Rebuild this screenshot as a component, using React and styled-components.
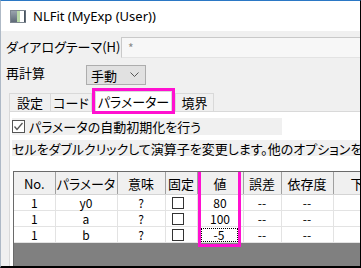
import React from "react";
import styled, { createGlobalStyle } from "styled-components";

const GlobalStyle = createGlobalStyle`
  html, body {
    margin: 0;
    padding: 0;
    background: #ffffff;
  }
  body {
    font-family: "Noto Sans CJK JP", "Noto Sans", sans-serif;
    font-feature-settings: "palt";
    color: #000;
  }
`;

const Window = styled.div`
  width: 361px;
  height: 268px;
  box-sizing: border-box;
  border-top: 1px solid #2b78c5;
  border-right: 1px solid #000;
  border-bottom: 2px solid #000;
  border-left: 1px solid #aeb9c6;
  background: #f0f0f0;
  display: flex;
  flex-direction: column;
  overflow: hidden;
`;

const TitleBar = styled.div`
  height: 30px;
  flex: none;
  background: #fff;
  display: flex;
  align-items: center;
  padding-left: 9px;
  gap: 7px;
`;

const Title = styled.span`
  font-family: "Noto Sans", "Liberation Sans", sans-serif;
  font-size: 13px;
  line-height: 1;
`;

const Body = styled.div`
  flex: 1;
  min-height: 0;
  display: flex;
  flex-direction: column;
  padding: 6px 0 0 5px;
  font-size: 13px;
`;

const FieldRow = styled.div`
  display: flex;
  align-items: center;
  margin-top: ${(p) => p.$top || 0}px;
`;

const Label = styled.span`
  width: ${(p) => p.$w}px;
  flex: none;
  line-height: 1;
  padding-bottom: ${(p) => p.$lift || 0}px;
`;

const ThemeInput = styled.div`
  flex: 1;
  height: 21px;
  box-sizing: border-box;
  border: 1px solid #c9c9c9;
  border-bottom-color: #e3e3e3;
  border-right: none;
  background: #f7f7f7;
  color: #8a8a8a;
  font-size: 12px;
  padding-left: 6px;
  display: flex;
  align-items: center;
`;

const Select = styled.div`
  width: 60px;
  height: 20px;
  box-sizing: border-box;
  border: 1px solid #adadad;
  background: #e1e1e1;
  display: flex;
  align-items: center;
  justify-content: space-between;
  padding: 0 6px 0 4px;
  line-height: 1;
`;

const TabStrip = styled.div`
  display: flex;
  align-items: flex-end;
  height: 21px;
  margin: 5px 0 0 3px;
  flex: none;
`;

const Tab = styled.div`
  width: ${(p) => p.$w}px;
  height: ${(p) => (p.$active ? 20 : 18)}px;
  margin-left: ${(p) => p.$ml || 0}px;
  box-sizing: border-box;
  border: 1px solid #d9d9d9;
  border-bottom: none;
  background: ${(p) => (p.$active ? "#fff" : "#f0f0f0")};
  outline: ${(p) => (p.$active ? "3px solid #ff10d0" : "none")};
  display: flex;
  align-items: center;
  justify-content: center;
  line-height: 1;
  position: relative;
  z-index: ${(p) => (p.$active ? 2 : 0)};
`;

const Panel = styled.div`
  flex: 1;
  min-height: 0;
  margin-left: 3px;
  border-top: 1px solid #d9d9d9;
  border-left: 1px solid #d9d9d9;
  background: #fff;
  display: flex;
  flex-direction: column;
  padding: 6px 0 0 2px;
`;

const CheckRow = styled.div`
  width: 270px;
  height: 17px;
  background: #f0f0f0;
  display: flex;
  align-items: center;
  gap: 4px;
  line-height: 1;
`;

const Hint = styled.div`
  margin-top: 5px;
  height: 16px;
  background: #f0f0f0;
  display: flex;
  align-items: center;
  white-space: nowrap;
  overflow: hidden;
  line-height: 1;
`;

const GridArea = styled.div`
  flex: 1;
  margin: 15px 0 0 1px;
  background: #808080;
  border-left: 1px solid #6a6a6a;
  border-top: 1px solid #6a6a6a;
  position: relative;
  overflow: hidden;
`;

const Table = styled.table`
  border-collapse: collapse;
  table-layout: fixed;
  width: 380px;
  font-size: 12px;
  line-height: 1;
`;

const Head = styled.th`
  height: 22px;
  padding: 0;
  font-size: 13px;
  font-weight: normal;
  background: #f0f0f0;
  border-right: 1px solid #a0a0a0;
  border-bottom: 1px solid #d4d4d4;
  text-align: center;
  white-space: nowrap;
  overflow: hidden;
`;

const Cell = styled.td`
  height: 15px;
  padding: 0;
  background: #fff;
  border-right: 1px solid #e3e3e3;
  border-bottom: 1px solid #e3e3e3;
  text-align: center;
`;

const FocusBox = styled.div`
  margin: 1px 5px 0 3px;
  height: 14px;
  box-sizing: border-box;
  border: 1px dotted #000;
  display: flex;
  align-items: center;
  justify-content: center;
`;

const Box = styled.span`
  display: block;
  width: 12px;
  height: 12px;
  box-sizing: border-box;
  border: 1px solid #333;
  background: #fff;
  margin: 0 0 0 6px;
`;

const ColumnMark = styled.div`
  position: absolute;
  left: 184px;
  top: -3px;
  width: 43px;
  height: 78px;
  box-sizing: border-box;
  border: 3px solid #ff10d0;
  pointer-events: none;
`;

const AppIcon = () => (
  <svg width="16" height="13" viewBox="0 0 16 13">
    <defs>
      <linearGradient id="ig" x1="0" x2="0" y1="0" y2="1">
        <stop offset="0" stopColor="#9aa3ad" />
        <stop offset="1" stopColor="#5f6b78" />
      </linearGradient>
    </defs>
    <rect x="0.5" y="0.5" width="15" height="12" fill="#fff" stroke="#7d8690" />
    <rect x="1" y="1" width="6" height="11" fill="url(#ig)" />
    <rect x="7" y="1" width="3" height="11" fill="#b9d9a8" />
    <rect x="14" y="1" width="1.5" height="11" fill="#4a5561" />
  </svg>
);

const Chevron = () => (
  <svg width="9" height="6" viewBox="0 0 9 6">
    <path d="M0.5 0.5 L4.5 4.5 L8.5 0.5" fill="none" stroke="#555" strokeWidth="1" />
  </svg>
);

const CheckIcon = () => (
  <svg width="13" height="13" viewBox="0 0 13 13">
    <rect x="0.5" y="0.5" width="12" height="12" fill="#fff" stroke="#555" />
    <path d="M2.5 6.5 L5 9.5 L10.5 3" fill="none" stroke="#555" strokeWidth="1.3" />
  </svg>
);

const columns = [
  { title: "No.", w: 41 },
  { title: "パラメータ", w: 62 },
  { title: "意味", w: 48 },
  { title: "固定", w: 32 },
  { title: "値", w: 46 },
  { title: "誤差", w: 38 },
  { title: "依存度", w: 52 },
  { title: "下側", w: 61 },
];

const params = [
  { name: "y0", value: "80" },
  { name: "a", value: "100" },
  { name: "b", value: "-5", focus: true },
];

export default function App() {
  return (
    <>
      <GlobalStyle />
      <Window>
        <TitleBar>
          <AppIcon />
          <Title>NLFit (MyExp (User))</Title>
        </TitleBar>
        <Body>
          <FieldRow>
            <Label $w={115} $lift={3}>ダイアログテーマ(H)</Label>
            <ThemeInput>*</ThemeInput>
          </FieldRow>
          <FieldRow $top={7}>
            <Label $w={80} $lift={5}>再計算</Label>
            <Select>
              <span>手動</span>
              <Chevron />
            </Select>
          </FieldRow>
          <TabStrip>
            <Tab $w={42}>設定</Tab>
            <Tab $w={42} $ml={-1}>コード</Tab>
            <Tab $w={77} $ml={3} $active>パラメーター</Tab>
            <Tab $w={39} $ml={3}>境界</Tab>
          </TabStrip>
          <Panel>
            <CheckRow>
              <CheckIcon />
              <span>パラメータの自動初期化を行う</span>
            </CheckRow>
            <Hint>セルをダブルクリックして演算子を変更します。他のオプションを利用するには右クリックします。</Hint>
            <GridArea>
              <Table>
                <colgroup>
                  {columns.map((c) => (
                    <col key={c.title} style={{ width: c.w }} />
                  ))}
                </colgroup>
                <thead>
                  <tr>
                    {columns.map((c) => (
                      <Head key={c.title}>{c.title}</Head>
                    ))}
                  </tr>
                </thead>
                <tbody>
                  {params.map((p) => (
                    <tr key={p.name}>
                      <Cell>1</Cell>
                      <Cell>{p.name}</Cell>
                      <Cell>?</Cell>
                      <Cell>
                        <Box />
                      </Cell>
                      <Cell>{p.focus ? <FocusBox>{p.value}</FocusBox> : p.value}</Cell>
                      <Cell>--</Cell>
                      <Cell>--</Cell>
                      <Cell />
                    </tr>
                  ))}
                </tbody>
              </Table>
              <ColumnMark />
            </GridArea>
          </Panel>
        </Body>
      </Window>
    </>
  );
}
